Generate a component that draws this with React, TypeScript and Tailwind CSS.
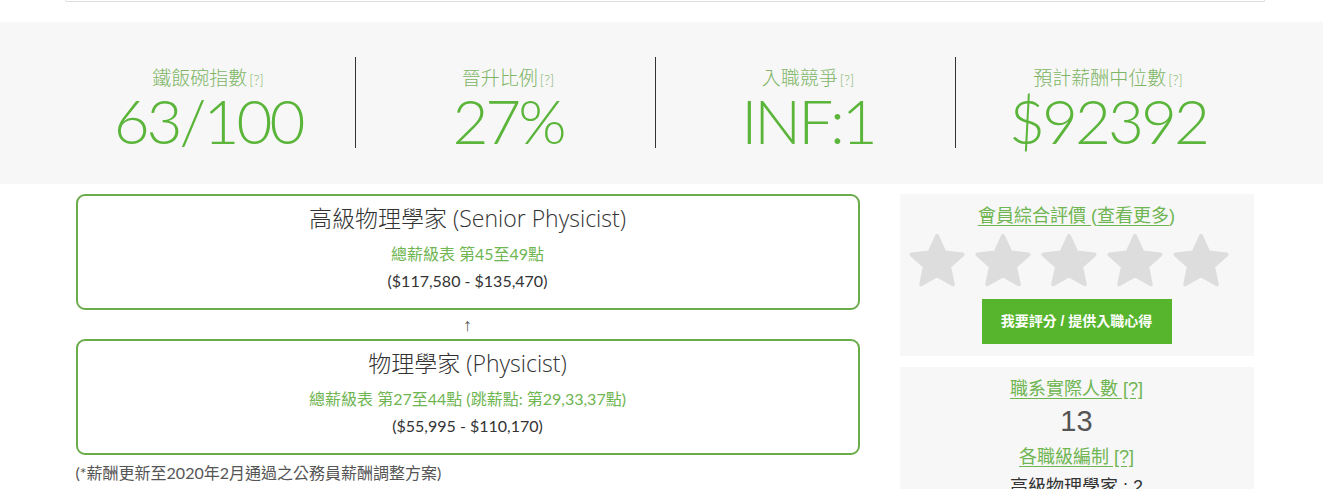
import React from 'react';

const STATS = [
  { label: '鐵飯碗指數', value: '63/100' },
  { label: '晉升比例', value: '27%' },
  { label: '入職競爭', value: 'INF:1' },
  { label: '預計薪酬中位數', value: '$92392' },
];

const RANKS = [
  { title: '高級物理學家 (Senior Physicist)', scale: '總薪級表 第45至49點', pay: '($117,580 - $135,470)' },
  { title: '物理學家 (Physicist)', scale: '總薪級表 第27至44點 (跳薪點: 第29,33,37點)', pay: '($55,995 - $110,170)' },
];

const cjk = "font-['Lato','Noto_Sans_CJK_TC',sans-serif]";
const arial = "font-['Liberation_Sans','Noto_Sans_CJK_TC',sans-serif]";

const Star: React.FC = () => (
  <svg width="60" height="58" viewBox="0 0 60 58">
    <polygon
      points="30,4 37.6,20.5 55.5,22.4 42.1,34.6 45.8,52.3 30,43.3 14.2,52.3 17.9,34.6 4.5,22.4 22.4,20.5"
      fill="#dddddd"
      stroke="#dddddd"
      strokeWidth="4"
      strokeLinejoin="round"
    />
  </svg>
);

const RankBox: React.FC<{ title: string; scale: string; pay: string }> = ({ title, scale, pay }) => (
  <div className={`h-[116px] border-2 border-[#6aad48] rounded-[9px] text-center ${cjk}`}>
    <div className="pt-[10px] text-[23px] leading-[24px] text-[#333] font-light font-['Open_Sans','Noto_Sans_CJK_TC',sans-serif]">{title}</div>
    <div className="mt-[14px] text-[16px] leading-[20px] text-[#6fb552]">{scale}</div>
    <div className="mt-[7px] text-[16px] leading-[20px] text-[#333]">{pay}</div>
  </div>
);

export default function App() {
  return (
    <div className="w-[1323px] h-[489px] overflow-hidden bg-white">
      <div className="w-[1200px] h-[2px] ml-[65px] border-x border-b border-[#dddddd] rounded-b-[3px]" />

      <div className="mt-[20px] h-[162px] bg-[#f7f7f7]">
        <div className="w-[1200px] mx-auto flex pt-[35px]">
          {STATS.map((s, i) => (
            <div key={s.label} className="w-[300px] flex">
              <div className="flex-1 pl-[7px] pr-[7px] text-center">
                <div className={`mt-[10px] text-[19px] leading-[22px] text-[#7db565] font-light ${cjk}`}>
                  {s.label}
                  <span className="text-[14px] ml-[2px]">[?]</span>
                </div>
                <div className="text-[62px] leading-[58px] tracking-[-3px] text-[#5bb53a] font-['Lato',sans-serif] font-light">{s.value}</div>
              </div>
              {i < 3 ? <div className="w-px h-[91px] bg-[#333] mr-[6px]" /> : <div className="w-px mr-[6px]" />}
            </div>
          ))}
        </div>
      </div>

      <div className="w-[1200px] mx-auto flex mt-[10px]">
        <div className="ml-[14px] w-[784px]">
          <RankBox {...RANKS[0]} />
          <div className="text-center text-[18px] leading-[29px] text-[#555] font-light">↑</div>
          <RankBox {...RANKS[1]} />
          <div className={`mt-[8px] text-[16px] leading-[20px] text-[#555] ${cjk}`}>(*薪酬更新至2020年2月通過之公務員薪酬調整方案)</div>
        </div>

        <div className={`ml-[40px] w-[354px] ${arial}`}>
          <div className="h-[162px] bg-[#f7f7f7] pt-[11px] text-center">
            <div className="text-[18px] leading-[22px] text-[#6fb552]">
              <span className="underline underline-offset-[3px]">會員綜合評價 </span>(<span className="underline underline-offset-[3px]">查看更多</span>)
            </div>
            <div className="flex gap-[6px] pl-[7px] mt-[5px]">
              {[0, 1, 2, 3, 4].map(i => <Star key={i} />)}
            </div>
            <button className="mt-[9px] w-[190px] h-[45px] bg-[#57b52d] text-white text-[14px] font-bold">我要評分 / 提供入職心得</button>
          </div>

          <div className="mt-[11px] h-[140px] bg-[#f7f7f7] pt-[10px] text-center">
            <div className="text-[18px] leading-[24px] text-[#6fb552] underline underline-offset-[3px]">職系實際人數 [?]</div>
            <div className="mt-[4px] text-[29px] leading-[32px] text-[#555]">13</div>
            <div className="mt-[8px] text-[18px] leading-[24px] text-[#6fb552] underline underline-offset-[3px]">各職級編制 [?]</div>
            <div className="mt-[6px] text-[18px] leading-[24px] text-[#333]">高級物理學家 : 2</div>
          </div>
        </div>
      </div>
    </div>
  );
}
